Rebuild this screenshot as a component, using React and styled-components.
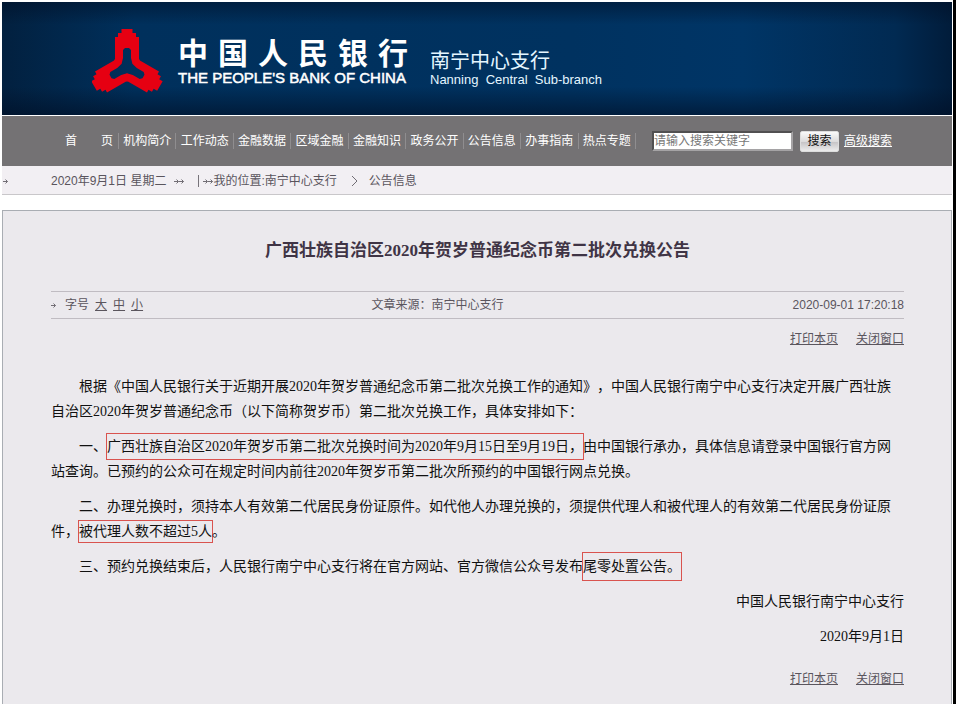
import React from "react";
import styled, { createGlobalStyle } from "styled-components";

const GlobalStyle = createGlobalStyle`
  * { box-sizing: border-box; }
  html { background: #000; }
  body {
    margin: 0;
    color: #5a555d;
    font: 12px/16px "Liberation Sans", "Noto Sans CJK SC", sans-serif;
    text-spacing-trim: space-all;
  }
  p, h1, ul { margin: 0; padding: 0; }
  a { color: inherit; }
`;

const Page = styled.div`
  min-height: 100vh;
  margin-right: 3px;
  padding: 2px 1px 0 2px;
  display: flex;
  flex-direction: column;
  background: #fff;
`;

const Banner = styled.header`
  display: flex;
  align-items: flex-start;
  height: 113px;
  padding: 27px 90px 0;
  color: #fff;
  background:
    linear-gradient(180deg, rgba(0, 14, 36, 0.5), transparent 20%, transparent 75%, rgba(0, 14, 36, 0.6)),
    linear-gradient(90deg, #02203f, #00305c 14%, #003260 60%, #003566 78%, #012a52 94%, #011c3a);
`;

const BankName = styled.div`
  width: 230px;
  margin: 6px 22px 0 14px;
`;

const ChineseName = styled.div`
  display: flex;
  justify-content: space-between;
  font: bold 30px/32px "Noto Sans CJK SC", sans-serif;
`;

const EnglishName = styled.div`
  font: 500 15px/22px "Liberation Sans", sans-serif;
  -webkit-text-stroke: 0.5px #fff;
  white-space: nowrap;
`;

const Branch = styled.div`
  margin-top: 20px;
  color: #e4f6ff;
  font-size: 20px;
  line-height: 24px;
`;

const BranchEnglish = styled.div`
  font-size: 13px;
  line-height: 14px;
  white-space: pre;
`;

const NavBar = styled.nav`
  display: flex;
  align-items: center;
  gap: 16px;
  margin-top: 1px;
  height: 50px;
  padding: 0 60px 0 63px;
  color: #fff;
  background: #747274;
`;

const Menu = styled.ul`
  display: flex;
  flex: 1;
  list-style: none;
`;

const MenuItem = styled.li`
  flex: ${(p) => (p.$home ? "0 0 54px" : "1 1 0")};
  text-align: ${(p) => (p.$home ? "left" : "center")};
  white-space: nowrap;
  border-right: 1px solid #8f8d8f;
  a { text-decoration: none; }
`;

const SearchForm = styled.form`
  display: flex;
  align-items: center;
  width: 240px;
`;

const SearchInput = styled.input`
  flex: 1;
  min-width: 0;
  height: 20px;
  padding: 0;
  border: 2px inset #a5a3a5;
  border-radius: 0;
  background: #fff;
  font: inherit;
  &::placeholder { color: #777; opacity: 1; }
`;

const SearchButton = styled.button`
  width: 39px;
  height: 21px;
  margin: 0 5px 0 7px;
  padding: 0;
  border: 1px solid #ddd;
  border-radius: 2px;
  background: linear-gradient(#fafafa, #dcdbdc 50%, #c4c2c4 51%, #ececec);
  color: #111;
  font: inherit;
`;

const Crumbs = styled.div`
  display: flex;
  align-items: center;
  height: 29px;
  padding: 2px 0 0 1px;
  border-bottom: 1px solid #c9c7ca;
  background: #f2eff3;
`;

const Today = styled.time`
  margin: 0 8px 0 43px;
`;

const Divider = styled.span`
  width: 1px;
  height: 12px;
  margin: 0 4px 0 14px;
  background: #77737a;
`;

const Glyph = styled.svg`
  flex: none;
  fill: none;
  stroke: #716d74;
  stroke-width: 1;
`;

const Chevron = styled(Glyph)`
  margin: 0 11px 0 14px;
`;

const Article = styled.main`
  flex: 1;
  margin-top: 15px;
  padding: 28px 47px 16px 48px;
  border: 1px solid #a9adb3;
  border-bottom: 0;
  background: #ebe9ed;
`;

const Title = styled.h1`
  color: #3f3445;
  font: bold 17px/24px "Liberation Serif", "Noto Sans CJK SC", sans-serif;
  text-align: center;
`;

const Meta = styled.div`
  display: grid;
  grid-template-columns: 4fr auto 5fr;
  align-items: center;
  height: 28px;
  margin-top: 28px;
  border: solid #c0bcc2;
  border-width: 1px 0;
  & > :first-child { display: flex; align-items: center; gap: 6px; }
  & > :last-child { text-align: right; }
`;

const SizeLabel = styled.span`
  margin-left: 3px;
`;

const Actions = styled.div`
  display: flex;
  justify-content: flex-end;
  gap: 18px;
  line-height: 24px;
`;

const TopActions = styled(Actions)`
  margin: 8px 0 23px;
`;

const BottomActions = styled(Actions)`
  margin-top: 18px;
`;

const Paragraph = styled.p`
  margin-bottom: 10px;
  color: #111;
  font: 14px/25px "Liberation Serif", "Noto Sans CJK SC", sans-serif;
  text-indent: ${(p) => (p.$signed ? "0" : "2em")};
  text-align: ${(p) => (p.$signed ? "right" : "left")};
`;

const Marked = styled.span`
  padding: ${(p) => p.$pad}px 0;
  box-shadow: 0 0 0 1px #d9534f;
`;

const menu = ["机构简介", "工作动态", "金融数据", "区域金融", "金融知识", "政务公开", "公告信息", "办事指南", "热点专题"];

const Arrow = () => (
  <Glyph width="5" height="7" viewBox="0 0 5 7" aria-hidden="true">
    <path d="M0 3.5H4.5M2.5 1.5L4.5 3.5L2.5 5.5" />
  </Glyph>
);

const arm = "M-5.5 -38H5.5V-34H9V-30H12V-7.5L13 -6.5L5.5 -3L4 -9V-17L2 -19H-2L-4 -17V-9L-5.5 -3L-13 -6.5L-12 -7.5V-30H-9V-34H-5.5Z";

const Logo = () => (
  <svg width="72" height="66" viewBox="-35 -38 72 66" fill="#e60012" role="img" aria-label="中国人民银行">
    <path d={arm} />
    <path d={arm} transform="rotate(120)" />
    <path d={arm} transform="rotate(240)" />
  </svg>
);

const PageLinks = () => (
  <>
    <a href="#print">打印本页</a>
    <a href="#close">关闭窗口</a>
  </>
);

export default function App() {
  return (
    <Page>
      <GlobalStyle />
      <Banner>
        <Logo />
        <BankName>
          <ChineseName>
            {[..."中国人民银行"].map((c) => <span key={c}>{c}</span>)}
          </ChineseName>
          <EnglishName>THE PEOPLE'S BANK OF CHINA</EnglishName>
        </BankName>
        <Branch>
          南宁中心支行
          <BranchEnglish>Nanning  Central  Sub-branch</BranchEnglish>
        </Branch>
      </Banner>
      <NavBar>
        <Menu>
          <MenuItem $home><a href="#home">首　　页</a></MenuItem>
          {menu.map((m) => <MenuItem key={m}><a href="#nav">{m}</a></MenuItem>)}
        </Menu>
        <SearchForm>
          <SearchInput type="text" aria-label="搜索关键字" placeholder="请输入搜索关键字" />
          <SearchButton type="button">搜索</SearchButton>
          <a href="#advanced">高级搜索</a>
        </SearchForm>
      </NavBar>
      <Crumbs>
        <Arrow />
        <Today>2020年9月1日 星期二</Today>
        <Arrow /><Arrow />
        <Divider />
        <Arrow /><Arrow />
        <span>我的位置:南宁中心支行</span>
        <Chevron width="7" height="12" viewBox="0 0 7 12" aria-hidden="true">
          <path d="M1 1L6 6L1 11" />
        </Chevron>
        <span>公告信息</span>
      </Crumbs>
      <Article>
        <Title>广西壮族自治区2020年贺岁普通纪念币第二批次兑换公告</Title>
        <Meta>
          <div>
            <Arrow />
            <SizeLabel>字号</SizeLabel>
            <a href="#large">大</a>
            <a href="#medium">中</a>
            <a href="#small">小</a>
          </div>
          <div>文章来源：南宁中心支行</div>
          <time>2020-09-01 17:20:18</time>
        </Meta>
        <TopActions><PageLinks /></TopActions>
        <Paragraph>
          根据《中国人民银行关于近期开展2020年贺岁普通纪念币第二批次兑换工作的通知》，中国人民银行南宁中心支行决定开展广西壮族自治区2020年贺岁普通纪念币（以下简称贺岁币）第二批次兑换工作，具体安排如下：
        </Paragraph>
        <Paragraph>
          一、<Marked $pad={5}>广西壮族自治区2020年贺岁币第二批次兑换时间为2020年9月15日至9月19日，</Marked>由中国银行承办，具体信息请登录中国银行官方网站查询。已预约的公众可在规定时间内前往2020年贺岁币第二批次所预约的中国银行网点兑换。
        </Paragraph>
        <Paragraph>
          二、办理兑换时，须持本人有效第二代居民身份证原件。如代他人办理兑换的，须提供代理人和被代理人的有效第二代居民身份证原件，<Marked $pad={3}>被代理人数不超过5人</Marked>。
        </Paragraph>
        <Paragraph>
          三、预约兑换结束后，人民银行南宁中心支行将在官方网站、官方微信公众号发布<Marked $pad={6}>尾零处置公告。</Marked>
        </Paragraph>
        <Paragraph $signed>中国人民银行南宁中心支行</Paragraph>
        <Paragraph $signed>2020年9月1日</Paragraph>
        <BottomActions><PageLinks /></BottomActions>
      </Article>
    </Page>
  );
}
